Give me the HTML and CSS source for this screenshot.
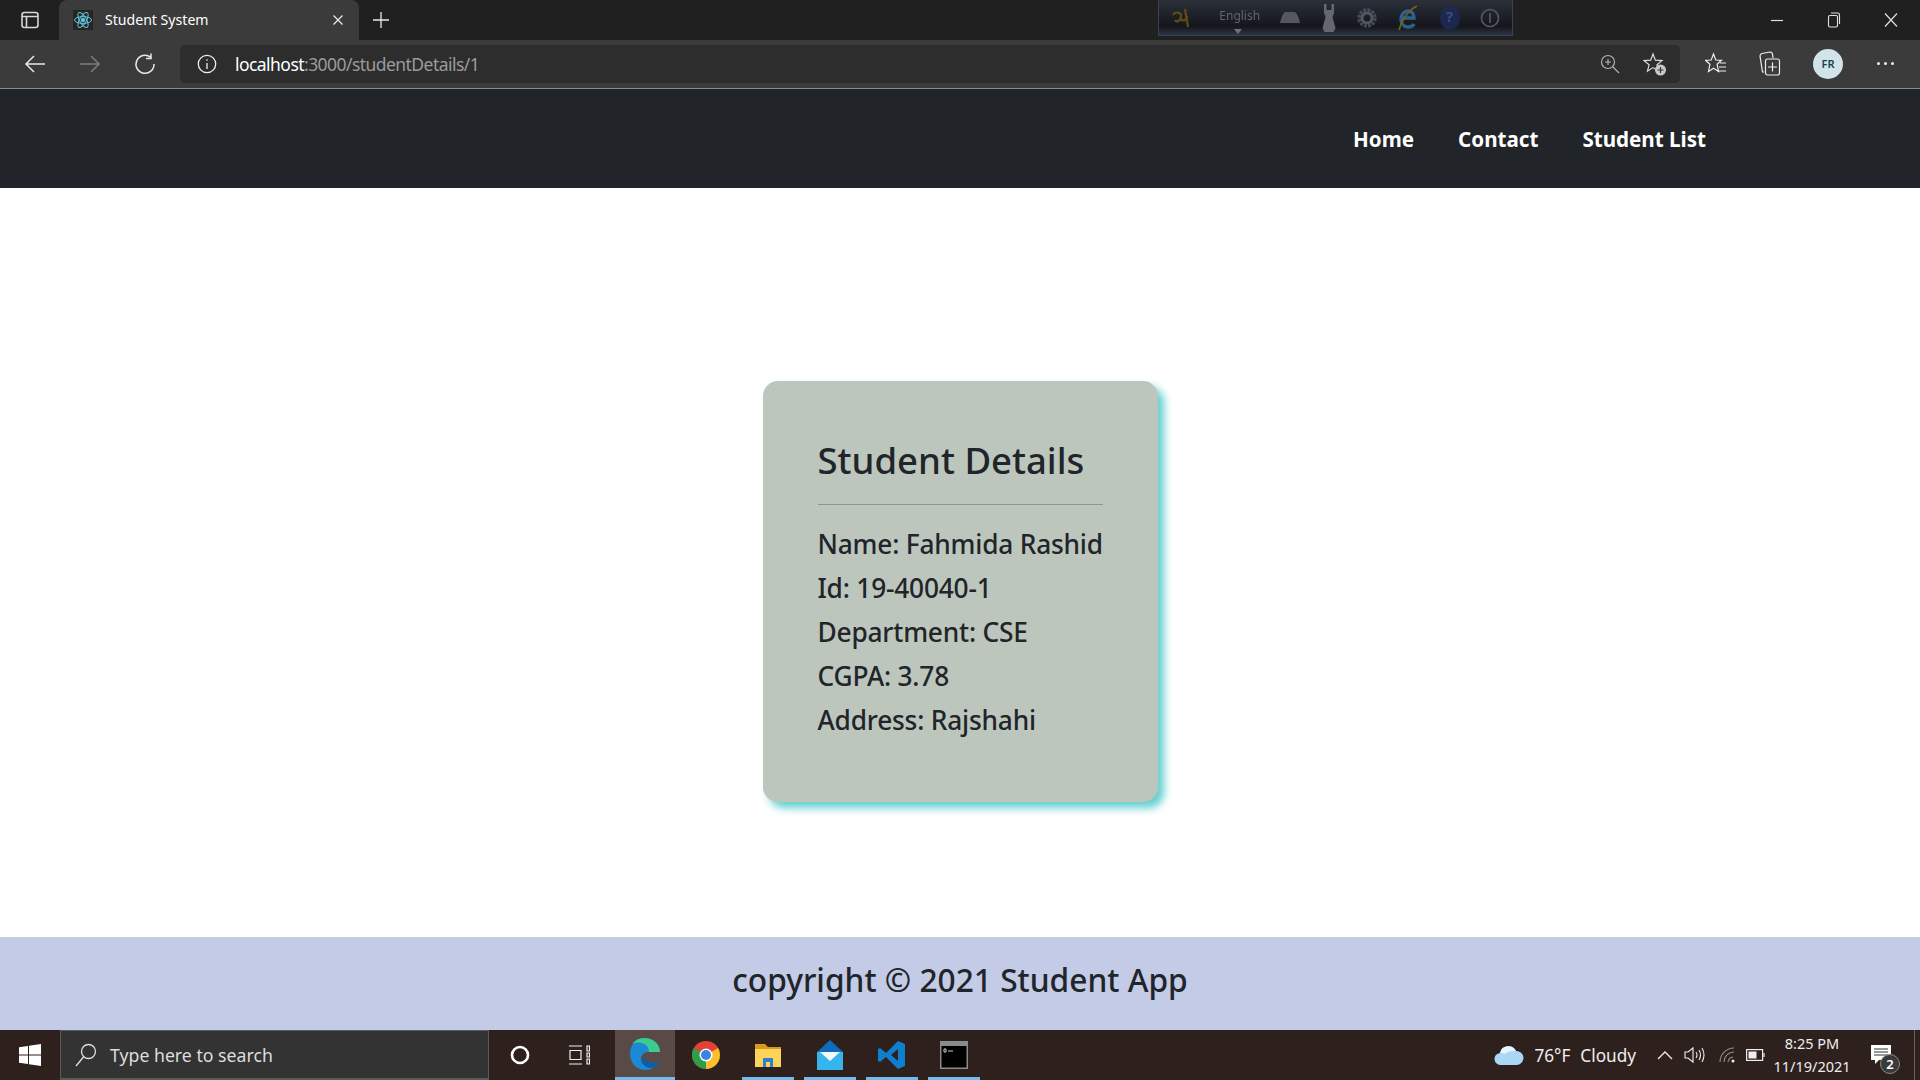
FILE: index.html
```html
<!DOCTYPE html>
<html lang="en">
<head>
    <meta charset="UTF-8">
    <title>Student System</title>
    <link rel="stylesheet" href="styles.css">
</head>
<body>
    <div class="tabstrip">
        <div class="tab-menu">
            <svg width="20" height="20" viewBox="0 0 20 20" fill="none" stroke="#d8d8d8" stroke-width="1.6"><rect x="2" y="2.5" width="16" height="15" rx="2.5"/><path d="M2 6.5h16M6.5 6.5v11"/></svg>
        </div>
        <div class="tab">
            <span class="favicon">
                <svg width="20" height="20" viewBox="0 0 20 20" fill="none" stroke="#61c6de" stroke-width="1"><circle cx="10" cy="10" r="1.8" fill="#61c6de"/><ellipse cx="10" cy="10" rx="8.5" ry="3.4"/><ellipse cx="10" cy="10" rx="8.5" ry="3.4" transform="rotate(60 10 10)"/><ellipse cx="10" cy="10" rx="8.5" ry="3.4" transform="rotate(120 10 10)"/></svg>
            </span>
            <span class="tab-title">Student System</span>
            <svg class="tab-close" width="12" height="12" viewBox="0 0 12 12" stroke="#e8e8e8" stroke-width="1.3"><path d="M1.5 1.5l9 9M10.5 1.5l-9 9"/></svg>
        </div>
        <svg class="tab-new" width="18" height="18" viewBox="0 0 18 18" stroke="#e8e8e8" stroke-width="1.3"><path d="M9 1v16M1 9h16"/></svg>
        <div class="win-controls">
            <svg width="14" height="14" viewBox="0 0 14 14" stroke="#e0e0e0" stroke-width="1.2"><path d="M1 7.5h12"/></svg>
            <svg width="14" height="16" viewBox="0 0 14 16" fill="none" stroke="#e0e0e0" stroke-width="1.1"><rect x="1.5" y="3.5" width="9" height="11.5" rx="1.5"/><path d="M4 1h6.5a2 2 0 0 1 2 2v9"/></svg>
            <svg width="14" height="14" viewBox="0 0 14 14" stroke="#e0e0e0" stroke-width="1.2"><path d="M1 .5l12 13M13 .5l-12 13"/></svg>
        </div>
        <div class="ime-bar">
            <svg width="20" height="22" viewBox="0 0 20 22" fill="none" stroke="#6e5218" stroke-width="2.2"><path d="M2 8c2-4 9-3 8 2s-5 5-6 3M9 12c3 3 7 1 7-3M14 2l3 18"/></svg>
            <span class="ime-lang">English<i class="ime-caret"></i></span>
            <svg width="20" height="11" viewBox="0 0 20 11"><path d="M5 0h10q3 2 5 11H0q2-9 5-11z" fill="#5f6268"/></svg>
            <svg width="16" height="28" viewBox="0 0 16 28"><path d="M3 0h2.500v6h5V0H13v9l-1.500 4 3 11-2 4h-9l-2-4 3-11L3 9z" fill="#72757a"/></svg>
            <svg width="20" height="20" viewBox="0 0 20 20" fill="none"><circle cx="10" cy="10" r="8" stroke="#4c545e" stroke-width="3.500" stroke-dasharray="3 1.200"/><circle cx="10" cy="10" r="5" stroke="#5a626c" stroke-width="3"/></svg>
            <svg width="22" height="28" viewBox="0 0 22 28" fill="none"><path d="M4 14h13c0-5-3-7-6-7s-7 3-7 8 3 8 7 8c3 0 5-1 6-3" stroke="#2e6f9e" stroke-width="3.500"/><path d="M2 26C4 18 11 6 20 2" stroke="#86691c" stroke-width="1.800"/></svg>
            <span class="ime-help">?</span>
            <svg width="20" height="20" viewBox="0 0 20 20" fill="none" stroke="#63676c" stroke-width="1.6"><circle cx="10" cy="10" r="8.500"/><path d="M10 5v10"/></svg>
        </div>
    </div>

    <div class="toolbar">
        <div class="tool-btn">
            <svg width="22" height="20" viewBox="0 0 22 20" fill="none" stroke="#e8e8e8" stroke-width="1.5"><path d="M21 10H2M10 2l-8 8 8 8"/></svg>
        </div>
        <div class="tool-btn">
            <svg width="22" height="20" viewBox="0 0 22 20" fill="none" stroke="#7d7d7d" stroke-width="1.5"><path d="M1 10h19M12 2l8 8-8 8"/></svg>
        </div>
        <div class="tool-btn">
            <svg width="22" height="22" viewBox="0 0 22 22" fill="none" stroke="#e8e8e8" stroke-width="1.5"><path d="M16.500 4.200A9 9 0 1 0 20 11M17 .5v5h-5"/></svg>
        </div>
        <div class="addressbar">
            <svg class="info-icon" width="20" height="20" viewBox="0 0 20 20" fill="none" stroke="#eee" stroke-width="1.300"><circle cx="10" cy="10" r="8.700"/><path d="M10 9v6M10 5.200v1.600"/></svg>
            <span class="url"><span class="url-host">localhost</span>:3000/studentDetails/1</span>
            <svg class="addr-zoom" width="20" height="20" viewBox="0 0 20 20" fill="none" stroke="#b4b4b4" stroke-width="1.200"><circle cx="8" cy="8" r="6.500"/><path d="M13 13l6 6M8 5v6M5 8h6"/></svg>
            <svg class="addr-star" width="24" height="24" viewBox="0 0 24 24" fill="none" stroke="#ddd" stroke-width="1.200"><path d="M10 2l2.400 6.200 6.600.4-5 4.200 1.700 6.400L10 15.600l-5.600 3.600 1.700-6.400-5-4.200 6.600-.4z"/><circle cx="17.500" cy="18" r="5.500" fill="#c8c8c8" stroke="none"/><path d="M17.500 15v6M14.500 18h6" stroke="#333"/></svg>
        </div>
        <div class="tool-right">
            <svg width="22" height="24" viewBox="0 0 22 24" fill="none" stroke="#eee" stroke-width="1.200"><path d="M8.500 2l2.300 6 5.700.3-4.400 4 1.400 7.200-5-3.300-5 3.300 1.400-7.200-4.400-4 5.700-.3zM15 11h6M14 15h7M14 19h7"/></svg>
            <svg width="22" height="26" viewBox="0 0 22 26" fill="none" stroke="#eee" stroke-width="1.200"><path d="M5 21H3.500L1 5q0-2 2-2.500L11 1q2 0 2.500 2l.5 4"/><rect x="6.500" y="8" width="14" height="16" rx="2"/><path d="M13.500 11.500v9M9 16h9"/></svg>
            <span class="avatar">FR</span>
            <span class="more-dots"><i></i><i></i><i></i></span>
        </div>
    </div>

    <nav class="navbar">
        <a href="#">Home</a>
        <a href="#">Contact</a>
        <a href="#">Student List</a>
    </nav>

    <main class="content">
        <div class="card">
            <h2>Student Details</h2>
            <hr>
            <p>Name: Fahmida Rashid</p>
            <p>Id: 19-40040-1</p>
            <p>Department: CSE</p>
            <p>CGPA: 3.78</p>
            <p>Address: Rajshahi</p>
        </div>
    </main>

    <footer class="footer">copyright © 2021 Student App</footer>

    <div class="taskbar">
        <div class="start">
            <svg width="22" height="22" viewBox="0 0 22 22" fill="#fff"><path d="M0 3.200L9 2v8.500H0zM10 1.800L22 0v10.500H10zM0 11.500h9V20L0 18.800zM10 11.500h12V22l-12-1.800z"/></svg>
        </div>
        <div class="search">
            <svg width="22" height="24" viewBox="0 0 22 24" fill="none" stroke="#e0e0e0" stroke-width="1.300"><circle cx="13.500" cy="8.500" r="7"/><path d="M8.500 14L1 23"/></svg>
            <span>Type here to search</span>
        </div>
        <div class="task-icon">
            <svg width="20" height="20" viewBox="0 0 20 20" fill="none" stroke="#fff" stroke-width="2.600"><circle cx="10" cy="10" r="8"/></svg>
        </div>
        <div class="task-icon task-view">
            <svg width="22" height="20" viewBox="0 0 22 20" fill="none" stroke="#eee" stroke-width="1.200"><path d="M1 1h13M1 19h13M2 5.500h11v9H2zM19 1h2.500v5H19zM19 8h2.500v4H19zM19 14h2.500v5H19z"/></svg>
        </div>
        <div class="app app-active">
            <svg width="32" height="34" viewBox="0 0 32 34"><path d="M15 1C7 1 1 8 1 17c0 9 7 16 15 16 4 0 7-1 9-3-6 2-13-2-13-8 0-4 3-7 7-7h12C31 7 24 1 15 1z" fill="#1a8ad4"/><path d="M31 15C31 7 24 1 15 1 10 1 6 3 3 7c4-2 9-2 12 0 3 1 5 4 5 8z" fill="#3ccb8e"/><path d="M13 24c1 6 7 8 12 6 3-2 5-4 6-7-4 3-9 3-13 1-1-1-2-2-2-4-2 1-3 2-3 4z" fill="#0b5fa8"/></svg>
        </div>
        <div class="app">
            <svg width="30" height="30" viewBox="0 0 30 30"><circle cx="15" cy="15" r="14" fill="#e34133"/><path d="M15 15L27.100 8A14 14 0 0 1 15 29z" fill="#fbc02d"/><path d="M15 15L15 29A14 14 0 0 1 2.900 8z" fill="#2f9e48"/><circle cx="15" cy="15" r="6.500" fill="#fff"/><circle cx="15" cy="15" r="5" fill="#3b82e4"/></svg>
        </div>
        <div class="app app-open">
            <svg width="28" height="28" viewBox="0 0 28 28"><path d="M1 3h10l3 3h13v5H1z" fill="#d99a1a"/><path d="M1 8h26v18H1z" fill="#fdd35a"/><path d="M9 26v-9h10v9h-3v-5h-4v5z" fill="#2e7fd0"/></svg>
        </div>
        <div class="app app-open">
            <svg width="30" height="32" viewBox="0 0 30 32"><path d="M15 1L28 13v18H2V13z" fill="#0f6cbd"/><path d="M2 13h26v18H2z" fill="#35b5ec"/><path d="M5 13h20l-10 9z" fill="#f4f8fb"/></svg>
        </div>
        <div class="app app-open">
            <svg width="30" height="30" viewBox="0 0 30 30"><path d="M21 1l7 3v22l-7 3-12-12-6 5-2-1V9l2-1 6 5zM21 9l-7 6 7 6z" fill="#0e7fcf"/></svg>
        </div>
        <div class="app app-open">
            <svg width="28" height="28" viewBox="0 0 28 28"><rect x="0" y="0" width="28" height="28" fill="#8b8b8b"/><rect x="1.500" y="5" width="25" height="21.500" fill="#000"/><path d="M4 8h2v3H4zM8 10h5" stroke="#ccc" stroke-width="1"/></svg>
        </div>

        <div class="tray">
            <svg class="tray-cloud" width="30" height="20" viewBox="0 0 30 20"><path d="M7 20a6 6 0 0 1-1-12 8.500 8.500 0 0 1 16-2 6.800 6.800 0 0 1 1 14z" fill="#a9d7f4"/><path d="M6 8a8.500 8.500 0 0 1 16-2c-6 0-9 1-11 3-2-1-3-1-5-1z" fill="#e6f4fc"/></svg>
            <span class="tray-temp">76°F</span>
            <span class="tray-weather">Cloudy</span>
            <svg class="tray-chevron" width="16" height="10" viewBox="0 0 16 10" fill="none" stroke="#eee" stroke-width="1.300"><path d="M1 9l7-7 7 7"/></svg>
            <svg class="tray-sound" width="21" height="18" viewBox="0 0 21 18" fill="none" stroke="#eee" stroke-width="1.100"><path d="M1 6h3l5-4v14l-5-4H1zM12 6q2 3 0 6M15 4q3 5 0 10M18 2q4 7 0 14"/></svg>
            <svg class="tray-wifi" width="18" height="16" viewBox="0 0 18 16" fill="none" stroke="#8f8f8f" stroke-width="1.100"><path d="M1 15A14 14 0 0 1 15 1M5 15A10 10 0 0 1 15 5M9 15a6 6 0 0 1 5-5"/><circle cx="14" cy="14" r="1.500" fill="#eee" stroke="none"/></svg>
            <svg class="tray-battery" width="19" height="12" viewBox="0 0 19 12" fill="none" stroke="#eee" stroke-width="1.200"><rect x=".6" y=".6" width="16" height="10.800"/><path d="M18 4v4"/><rect x="2.500" y="2.500" width="8" height="7" fill="#eee" stroke="none"/></svg>
            <div class="clock">
                <span>8:25 PM</span>
                <span>11/19/2021</span>
            </div>
            <div class="notify">
                <svg width="20" height="19" viewBox="0 0 20 19"><path d="M0 0h20v15H8l-4 4v-4H0z" fill="#fff"/><path d="M3 4h14M3 7h14M3 10h14" stroke="#333" stroke-width="1"/></svg>
                <span class="notify-badge">2</span>
            </div>
            <span class="show-desktop"></span>
        </div>
    </div>
</body>
</html>
```

FILE: styles.css
```css
* { box-sizing: border-box; }
html, body { height: 100%; }
body {
    margin: 0;
    width: 1920px;
    height: 1080px;
    overflow: hidden;
    display: flex;
    flex-direction: column;
    position: relative;
    font-family: "Noto Sans", "Open Sans", sans-serif;
    background: #fff;
}

/* browser tabs */
.tabstrip {
    height: 40px;
    flex: none;
    display: flex;
    align-items: center;
    background: #202020;
    position: relative;
}
.tab-menu {
    width: 59px;
    padding-left: 20px;
    display: flex;
}
.tab {
    width: 300px;
    height: 40px;
    background: #3b3b3b;
    border-radius: 8px 8px 0 0;
    display: flex;
    align-items: center;
    padding-left: 14px;
    color: #fff;
    font-size: 14.100px;
}
.favicon {
    width: 20px;
    height: 20px;
    display: flex;
    background: #252525;
    margin-right: 12px;
}
.tab-title { flex: 1; margin-top: -2px; }
.tab-close { margin-right: 15px; }
.tab-new { margin-left: 13px; }
.win-controls {
    margin-left: auto;
    display: flex;
    align-items: center;
    gap: 43px;
    padding-right: 22px;
}
.ime-bar {
    position: absolute;
    left: 1158px;
    top: 0;
    width: 355px;
    height: 36px;
    display: flex;
    align-items: center;
    justify-content: space-between;
    padding: 0 12px 0 12px;
    background: linear-gradient(#2b303a, #14161b 75%, #2c3444);
    border: 1px solid #3a4252;
    border-top: none;
}
/* the floating bar is a bit blurry in the capture */
.ime-bar > * { filter: blur(0.5px); opacity: 0.85; }
.ime-lang {
    font-size: 12px;
    color: #6e7277;
    position: relative;
    margin: -4px 0 0 8px;
}
.ime-caret {
    position: absolute;
    left: 15px;
    top: 22px;
    border: 4px solid transparent;
    border-top: 5px solid #7c7f84;
    border-bottom: none;
}
.ime-help {
    width: 20px;
    height: 24px;
    border-radius: 50%;
    background: #1c2a58;
    color: #43558e;
    font-size: 15px;
    font-weight: 700;
    text-align: center;
}

/* browser toolbar */
.toolbar {
    height: 49px;
    flex: none;
    display: flex;
    align-items: center;
    padding-left: 7px;
    padding-bottom: 1px;
    background: #3b3b3b;
    border-bottom: 1px solid #8a8a8a;
}
.tool-btn {
    width: 55px;
    display: flex;
    justify-content: center;
}
.addressbar {
    width: 1500px;
    height: 38px;
    margin-left: 8px;
    border-radius: 5px;
    background: #2d2d2d;
    display: flex;
    align-items: center;
    padding-left: 17px;
}
.url {
    flex: 1;
    margin-left: 18px;
    font-size: 17.500px;
    letter-spacing: -0.55px;
    color: #9b9b9b;
}
.url-host { color: #fff; }
.addr-star { margin: 0 13px 0 23px; }
.tool-right {
    flex: 1;
    display: flex;
    align-items: center;
    padding-left: 25px;
    gap: 32px;
}
.avatar {
    width: 30px;
    height: 30px;
    border-radius: 50%;
    background: #d3e3ea;
    color: #1f3f4e;
    font-size: 11px;
    font-weight: 600;
    display: flex;
    align-items: center;
    justify-content: center;
}
.more-dots {
    display: flex;
    gap: 4px;
    margin-left: 2px;
}
.more-dots i {
    width: 3px;
    height: 3px;
    border-radius: 50%;
    background: #eee;
}

/* site */
.navbar {
    height: 99px;
    flex: none;
    background: #212529;
    display: flex;
    align-items: center;
    justify-content: flex-end;
    gap: 44px;
    padding-right: 214px;
}
.navbar a {
    color: #fff;
    font-size: 20.600px;
    font-weight: 700;
    text-decoration: none;
}
.content {
    flex: 1;
    display: flex;
    align-items: center;
    justify-content: center;
}
.card {
    width: 395px;
    height: 421px;
    margin-top: 58px;
    padding: 55px;
    border-radius: 15px;
    background: #bdc6bd;
    box-shadow: 6px 6px 8px #62cfcf;
    color: #212529;
}
.card h2 {
    margin: 0;
    font-size: 36.500px;
    font-weight: 500;
    line-height: 48px;
}
.card hr {
    margin: 20px 0 17px;
    border: none;
    border-top: 1px solid #8e9590;
}
.card p {
    margin: 0;
    font-size: 26.300px;
    font-weight: 500;
    line-height: 44px;
    letter-spacing: -0.2px;
    white-space: nowrap;
}
.footer {
    height: 93px;
    flex: none;
    padding-bottom: 9px;
    background: #c3cbe6;
    color: #212529;
    font-size: 31.700px;
    font-weight: 500;
    display: flex;
    align-items: center;
    justify-content: center;
}

/* windows taskbar */
.taskbar {
    height: 50px;
    flex: none;
    display: flex;
    align-items: center;
    background: #2e201d;
    color: #eee;
}
.start {
    width: 60px;
    display: flex;
    justify-content: center;
}
.search {
    width: 429px;
    height: 50px;
    display: flex;
    align-items: center;
    gap: 13px;
    padding-left: 14px;
    background: #333;
    border: 1px solid #5a5a5a;
    border-bottom: 2px solid #5a5a5a;
    font-size: 17.700px;
    color: #ddd;
}
.task-icon {
    width: 62px;
    display: flex;
    justify-content: center;
}
.task-view { margin-right: -24px; width: 56px; }
.app {
    width: 62px;
    height: 50px;
    display: flex;
    align-items: center;
    justify-content: center;
    position: relative;
}
.app-active {
    width: 60px;
    margin-left: 32px;
    background: #5a4a46;
    border-bottom: 3px solid #76b9ed;
}
.app-open::after {
    content: "";
    position: absolute;
    bottom: 0;
    left: 5px;
    right: 5px;
    height: 3px;
    background: #76b9ed;
}
.tray {
    margin-left: auto;
    height: 50px;
    display: flex;
    align-items: center;
    position: relative;
}
.tray-cloud { margin-right: 10px; }
.tray-temp { font-size: 17.200px; }
.tray-weather { font-size: 17.200px; margin-left: 10px; }
.tray-chevron { margin-left: 21px; }
.tray-sound { margin-left: 11px; }
.tray-wifi { margin-left: 13.500px; }
.tray-battery { margin-left: 9.500px; }
.clock {
    width: 96px;
    margin-left: -1px;
    display: flex;
    flex-direction: column;
    align-items: center;
    font-size: 14.500px;
    line-height: 23px;
}
.notify {
    width: 54px;
    height: 50px;
    position: relative;
    padding: 15px 0 0 11px;
}
.notify-badge {
    position: absolute;
    left: 20px;
    top: 24px;
    width: 20px;
    height: 20px;
    border-radius: 50%;
    background: #3a3a3a;
    border: 1px solid #888;
    font-size: 13px;
    font-weight: 600;
    line-height: 18px;
    text-align: center;
    color: #fff;
}
.show-desktop {
    width: 6px;
    height: 50px;
    border-left: 1px solid #6a5f5c;
}
```
